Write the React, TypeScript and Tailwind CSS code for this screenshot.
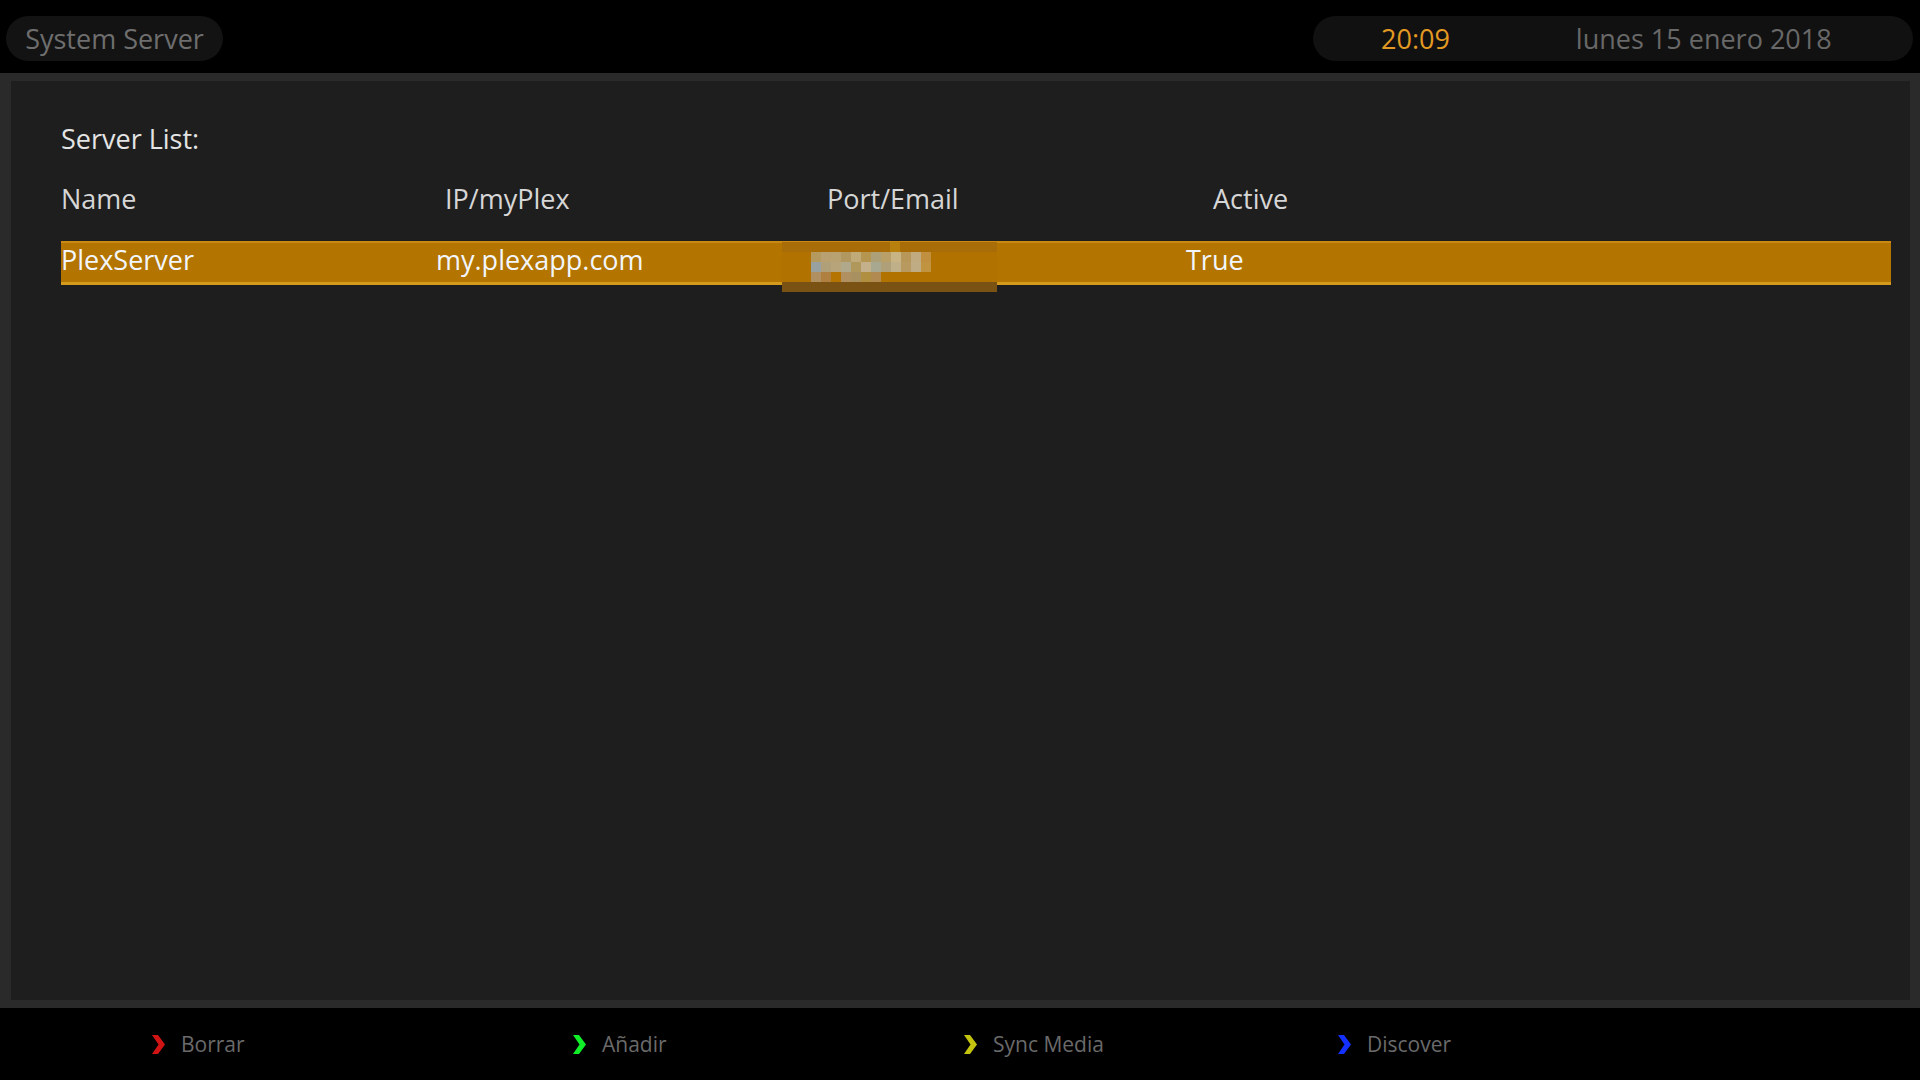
import React from 'react';

type Server = {
  name: string;
  host: string;
  active: string;
};

const servers: Server[] = [{ name: 'PlexServer', host: 'my.plexapp.com', active: 'True' }];

const columns = [
  { title: 'Name', width: 'w-[384px]' },
  { title: 'IP/myPlex', width: 'w-[382px]' },
  { title: 'Port/Email', width: 'w-[386px]' },
  { title: 'Active', width: 'w-[384px]' },
];

// pixelated cells that hide the port/email value
const mosaicRows: string[][] = [
  [
    'bg-[#b59a60]', 'bg-[#b8a070]', 'bg-[#b8a272]', 'bg-[#b09860]', 'bg-[#c0aa78]', 'bg-[#b59650]',
    'bg-[#aca078]', 'bg-[#b8a068]', 'bg-[#c8b484]', 'bg-[#b8985a]', 'bg-[#c0aa80]', 'bg-[#c09040]',
  ],
  [
    'bg-[#98a0a0]', 'bg-[#b0a07a]', 'bg-[#b8a47a]', 'bg-[#b0a88a]', 'bg-[#b0985c]', 'bg-[#c4b08a]',
    'bg-[#a8a890]', 'bg-[#b0a07a]', 'bg-[#c0b08a]', 'bg-[#b89a60]', 'bg-[#c0ac84]', 'bg-[#c09440]',
  ],
  ['bg-[#b09060]', 'bg-[#b08040]', 'bg-[#b57400]', 'bg-[#b09060]', 'bg-[#a89060]', 'bg-[#b09040]', 'bg-[#b08a50]'],
];

const actions = [
  { label: 'Borrar', color: '#d01414', width: 'w-[421px]' },
  { label: 'Añadir', color: '#10ee28', width: 'w-[391px]' },
  { label: 'Sync Media', color: '#c4c410', width: 'w-[374px]' },
  { label: 'Discover', color: '#1430ff', width: 'w-[200px]' },
];

const Chevron: React.FC<{ color: string }> = ({ color }) => (
  <svg width="13" height="19" viewBox="0 0 13 19">
    <polygon points="0,0 6,0 13,9.5 6,19 0,19 6.5,9.5" fill={color} />
  </svg>
);

const HiddenPort: React.FC = () => (
  <div className="absolute left-[-29px] top-[-1px] w-[215px] h-[50px] bg-[#b27200] flex flex-col">
    <div className="h-[10px] bg-[#a86c08] flex">
      <div className="ml-[108px] w-[10px] bg-[#b8800c]" />
    </div>
    <div className="h-[30px] pl-[29px] flex flex-col">
      {mosaicRows.map((row, r) => (
        <div key={r} className="flex h-[10px]">
          {row.map((cls, c) => (
            <div key={c} className={`w-[10px] h-[10px] ${cls}`} />
          ))}
        </div>
      ))}
    </div>
    <div className="h-[10px] bg-[#7a5214]" />
  </div>
);

const App: React.FC = () => {
  return (
    <div className="w-[1920px] h-[1080px] bg-black flex flex-col font-['Open_Sans',sans-serif] overflow-hidden">
      {/* Header */}
      <div className="h-[73px] flex items-start justify-between pt-[16px] pl-[6px] pr-[7px]">
        <div className="w-[217px] h-[45px] rounded-full bg-[#131313] flex items-center justify-center text-[27px] leading-none text-[#6e6e6e]">
          System Server
        </div>
        <div className="w-[600px] h-[45px] rounded-full bg-[#111111] flex items-center text-[27px] leading-none">
          <span className="ml-[68px] text-[#e39a22]">20:09</span>
          <span className="ml-[126px] text-[#686868]">lunes 15 enero 2018</span>
        </div>
      </div>

      {/* Server list panel */}
      <div className="h-[935px] bg-[#2a2a2a] pt-[8px] pb-[8px] pl-[11px] pr-[10px] flex">
        <div className="flex-1 bg-[#1e1e1e] pt-[40px] pl-[50px] pr-[19px] flex flex-col">
          <div className="h-[36px] flex items-center text-[27px] text-[#e4e4e4]">Server List:</div>
          <div className="mt-[24px] h-[36px] flex items-center text-[27px] text-[#d6d6d6]">
            {columns.map((col) => (
              <div key={col.title} className={col.width}>
                {col.title}
              </div>
            ))}
          </div>
          {servers.map((server) => (
            <div
              key={server.name}
              className="mt-[24px] h-[44px] bg-[#b37400] border-t-2 border-t-[#c88a12] border-b-[3px] border-b-[#d39a1c] flex items-center text-[27px] text-[#f2f6fc]"
            >
              <div className="w-[375px] pb-[5px]">{server.name}</div>
              <div className="w-[375px] pb-[5px]">{server.host}</div>
              <div className="w-[375px] relative h-full">
                <HiddenPort />
              </div>
              <div className="w-[375px] pb-[5px]">{server.active}</div>
            </div>
          ))}
        </div>
      </div>

      {/* Colour button hints */}
      <div className="flex-1 flex items-center pl-[152px]">
        {actions.map((action) => (
          <div key={action.label} className={`${action.width} flex items-center gap-[16px]`}>
            <Chevron color={action.color} />
            <span className="text-[21px] leading-none text-[#6a6a6a]">{action.label}</span>
          </div>
        ))}
      </div>
    </div>
  );
};

export default App;
